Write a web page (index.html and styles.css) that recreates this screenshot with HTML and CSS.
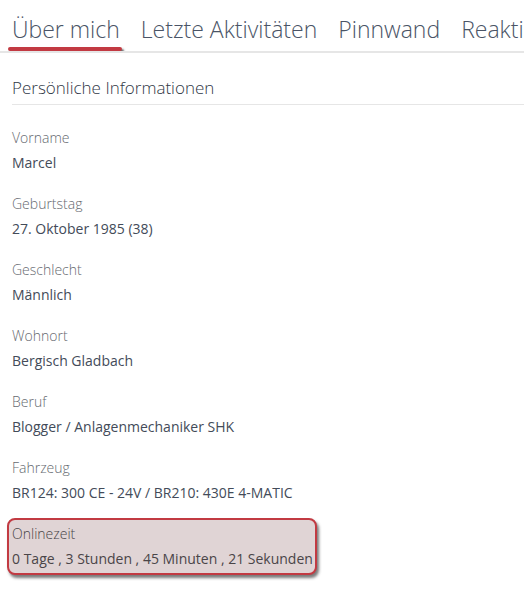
FILE: index.html
```html
<!DOCTYPE html>
<html lang="de">
<head>
<meta charset="utf-8">
<link rel="stylesheet" href="styles.css">
</head>
<body>
<div class="page">
  <nav class="tabs">
    <span class="tab active">Über mich</span>
    <span class="tab">Letzte Aktivitäten</span>
    <span class="tab">Pinnwand</span>
    <span class="tab">Reaktionen</span>
  </nav>
  <section class="content">
    <h2 class="section-title">Persönliche Informationen</h2>
    <dl class="fields">
      <div class="field"><dt>Vorname</dt><dd>Marcel</dd></div>
      <div class="field"><dt>Geburtstag</dt><dd>27. Oktober 1985 (38)</dd></div>
      <div class="field"><dt>Geschlecht</dt><dd>Männlich</dd></div>
      <div class="field"><dt>Wohnort</dt><dd>Bergisch Gladbach</dd></div>
      <div class="field"><dt>Beruf</dt><dd>Blogger / Anlagenmechaniker SHK</dd></div>
      <div class="field"><dt>Fahrzeug</dt><dd>BR124: 300 CE - 24V / BR210: 430E 4-MATIC</dd></div>
      <div class="field highlight"><dt>Onlinezeit</dt><dd>0 Tage , 3 Stunden , 45 Minuten , 21 Sekunden</dd></div>
    </dl>
  </section>
</div>
</body>
</html>
```
FILE: styles.css
```css
html, body {
  margin: 0;
  padding: 0;
  background: #fff;
  overflow: hidden;
}
body {
  font-family: "Open Sans", "Noto Sans", sans-serif;
  font-weight: 300;
  color: #3b4351;
}
.page {
  width: 524px;
  height: 599px;
  overflow: hidden;
}
.tabs {
  display: flex;
  white-space: nowrap;
  gap: 21px;
  padding: 14px 0 0 12px;
  border-bottom: 2px solid #e6e6e6;
  height: 37px;
  box-sizing: content-box;
  overflow: hidden;
}
.tab {
  font-size: 23px;
  line-height: 30px;
  color: #4a5466;
  position: relative;
}
.tab.active::after {
  content: "";
  position: absolute;
  left: -4px;
  right: -2px;
  top: 33px;
  height: 4px;
  border-radius: 2px;
  background: #c23a42;
  box-shadow: 2px 2px 2px rgba(40, 40, 40, 0.7);
}
.content {
  padding: 0 0 0 12px;
}
.section-title {
  margin: 0;
  font-weight: 300;
  font-size: 17px;
  line-height: 22px;
  padding: 24px 0 5px;
  color: #2f3745;
  border-bottom: 1px solid #e6e6e6;
}
.fields {
  margin: 0;
  padding: 24px 0 0;
  display: flex;
  flex-direction: column;
  gap: 23px;
}
.field {
  display: flex;
  flex-direction: column;
  gap: 7px;
}
.field dt {
  font-size: 14px;
  line-height: 18px;
  color: #666a70;
}
.field dd {
  margin: 0;
  font-size: 14px;
  line-height: 18px;
  font-weight: 400;
  color: #434b59;
}
.highlight {
  align-self: flex-start;
  margin-top: -7px;
  margin-left: -5px;
  padding: 5px 2px 5px 3px;
  border: 2px solid #c23a42;
  border-radius: 8px;
  background: #e0d4d5;
  box-shadow: 2px 3px 3px rgba(50, 50, 50, 0.65);
}
.highlight dt, .highlight dd {
  color: #4a4548;
}
```
